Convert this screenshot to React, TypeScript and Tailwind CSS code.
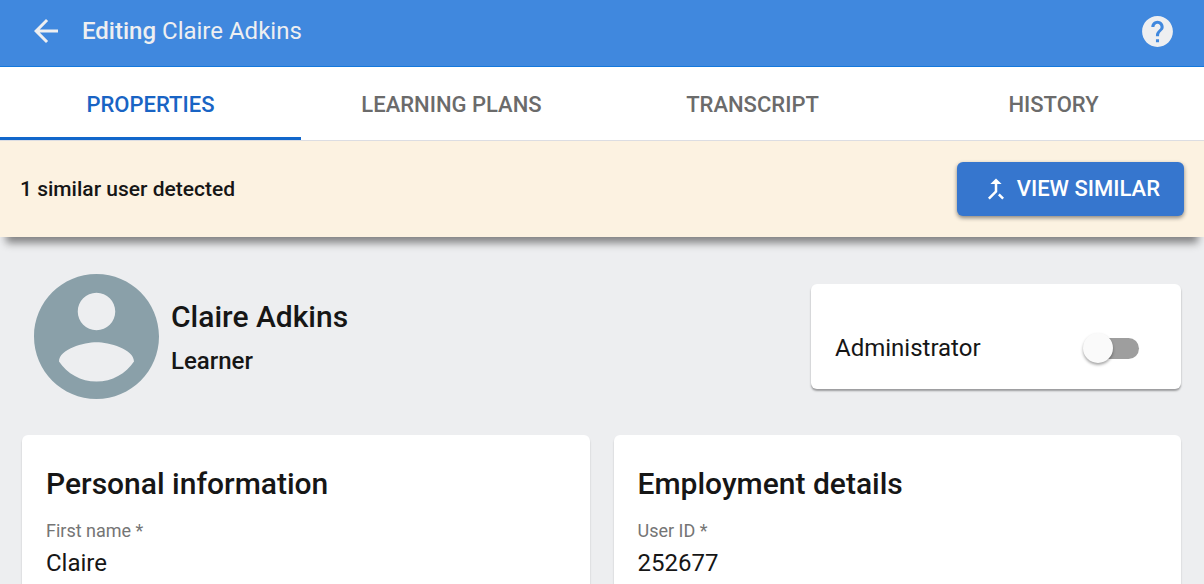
import { useState } from "react";
import { MdArrowBack, MdCallMerge, MdHelp } from "react-icons/md";

const tabs = ["Properties", "Learning plans", "Transcript", "History"];

const sections = [
	{ title: "Personal information", id: "first-name", label: "First name", value: "Claire" },
	{ title: "Employment details", id: "user-id", label: "User ID", value: "252677" },
];

function Header() {
	return (
		<header className="flex items-center justify-between border-b border-[#1478dc] bg-[#4088de] pt-3 pr-7 pb-4 pl-7 text-[#eeeff1]">
			<div className="flex items-center gap-[18px]">
				<button type="button" aria-label="Back">
					<MdArrowBack className="size-9" />
				</button>
				<h1 className="text-2xl leading-[38px] font-normal">
					<span className="font-medium">Editing</span> Claire Adkins
				</h1>
			</div>
			<button type="button" aria-label="Help">
				<MdHelp className="size-[37px]" />
			</button>
		</header>
	);
}

function Tabs() {
	const [active, setActive] = useState("Properties");

	return (
		<div role="tablist" className="grid grid-cols-4 border-b border-[#dcdde2] bg-white">
			{tabs.map((tab) => (
				<button
					key={tab}
					type="button"
					role="tab"
					aria-selected={tab === active}
					onClick={() => setActive(tab)}
					className={
						tab === active
							? "border-b-3 border-[#1267cb] pt-[22px] pb-4 text-[22px] leading-8 font-medium text-[#1964c4] uppercase"
							: "border-b-3 border-transparent pt-[22px] pb-4 text-[22px] leading-8 font-medium text-[#6b6b6b] uppercase"
					}
				>
					{tab}
				</button>
			))}
		</div>
	);
}

function SimilarBanner() {
	return (
		<div className="flex items-center justify-between bg-[#fcf2e1] px-5 py-[21px] shadow-[0_12px_8px_-6px_rgba(0,0,0,0.45)]">
			<p className="text-[21px] leading-8 font-medium text-[#161616]">1 similar user detected</p>
			<button
				type="button"
				className="flex items-center gap-1.5 rounded-md bg-[#3676ce] px-6 py-[11px] text-[22px] leading-8 font-medium text-white uppercase shadow-[0_2px_4px_rgba(0,0,0,0.45)]"
			>
				<MdCallMerge className="size-[30px]" />
				View similar
			</button>
		</div>
	);
}

function Avatar() {
	return (
		<svg viewBox="2 2 20 20" className="size-[125px] shrink-0 fill-[#8aa0a9]" aria-hidden="true">
			<path d="M12 2C6.48 2 2 6.48 2 12s4.48 10 10 10 10-4.48 10-10S17.52 2 12 2zm0 3c1.66 0 3 1.34 3 3s-1.34 3-3 3-3-1.34-3-3 1.34-3 3-3zm0 14.2c-2.5 0-4.71-1.28-6-3.22.03-1.99 4-3.08 6-3.08 1.99 0 5.97 1.09 6 3.08-1.29 1.94-3.5 3.22-6 3.22z" />
		</svg>
	);
}

function AdminCard() {
	return (
		<div className="w-[370px] rounded-md bg-white px-6 pt-11 pb-[21px] shadow-[0_2px_2px_rgba(0,0,0,0.35)]">
			<label className="flex items-center justify-between pr-[18px] text-2xl leading-10 text-[#161616]">
				Administrator
				<span className="relative flex h-[30px] w-14 items-center justify-end">
					<input type="checkbox" role="switch" className="peer absolute inset-0 z-10 opacity-0" />
					<span className="h-[21px] w-[51px] rounded-full bg-[#9e9e9e] peer-checked:bg-[#8fb3e4]" />
					<span className="absolute left-0 size-[30px] rounded-full bg-[#fafafa] shadow-[0_2px_3px_rgba(0,0,0,0.35)] peer-checked:right-0 peer-checked:left-auto peer-checked:bg-[#3676ce]" />
				</span>
			</label>
		</div>
	);
}

export default function App() {
	return (
		<div className="min-h-screen bg-[#edeef0] font-[Roboto,'Liberation_Sans',sans-serif] text-[#161616]">
			<Header />
			<Tabs />
			<SimilarBanner />

			<main className="pt-[37px] pr-[23px] pl-[22px]">
				<div className="flex items-center justify-between">
					<div className="flex items-center gap-3 pl-3">
						<Avatar />
						<div>
							<h2 className="text-3xl leading-[48px] font-medium">Claire Adkins</h2>
							<p className="text-2xl leading-10 font-medium">Learner</p>
						</div>
					</div>
					<AdminCard />
				</div>

				<div className="grid grid-cols-2 gap-6 pt-9">
					{sections.map((section) => (
						<section
							key={section.id}
							className="rounded-t-md bg-white px-6 pt-[25px] pb-6 shadow-[0_2px_2px_rgba(0,0,0,0.2)]"
						>
							<h3 className="text-3xl leading-[48px] font-medium">{section.title}</h3>
							<label htmlFor={section.id} className="block pt-[11px] text-lg leading-6 text-[#757575]">
								{section.label} *
							</label>
							<input
								id={section.id}
								defaultValue={section.value}
								required
								className="block w-full bg-transparent text-2xl leading-10 outline-none"
							/>
						</section>
					))}
				</div>
			</main>
		</div>
	);
}
